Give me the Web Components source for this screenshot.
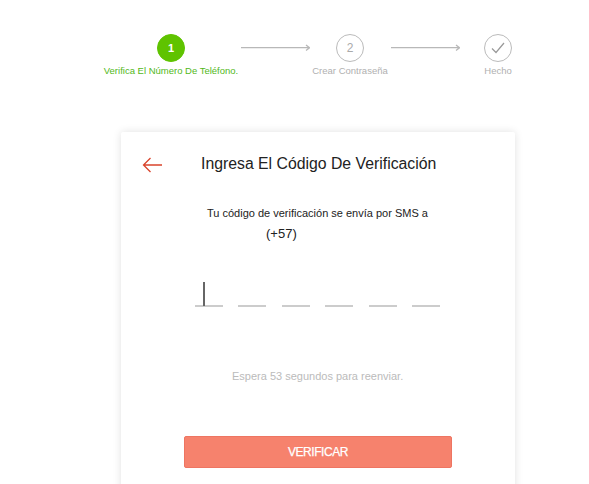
<!DOCTYPE html>
<html lang="es"><head><meta charset="utf-8"><title>Verificación</title>
<style>
html,body{margin:0;padding:0;height:484px;overflow:hidden;background:#fff;font-family:"Liberation Sans",Arial,sans-serif}
</style></head><body>
<verify-page></verify-page>
<script>
const def=(name,html)=>customElements.define(name,class extends HTMLElement{constructor(){super();this.attachShadow({mode:'open'}).innerHTML=html;}});
def('step-item',`<style>
:host{display:flex;flex-direction:column;align-items:center;width:28px;flex:none}
.c{box-sizing:border-box;width:28px;height:28px;border-radius:50%;border:1px solid #bbb;color:#aaa;display:flex;align-items:center;justify-content:center;font-size:12px}
:host([active]) .c{background:#5fc300;border-color:#5fc300;color:#fff;font-weight:700;font-size:11px}
.l{white-space:nowrap;font-size:9.5px;line-height:12px;margin-top:3px;color:#b0b0b0}
:host([active]) .l{color:#52b81a}
</style><div class="c"><slot name="icon"></slot></div><div class="l"><slot></slot></div>`);
def('step-arrow',`<style>
:host{display:block;flex:none;height:28px}
svg{display:block}
</style><svg width="69" height="28" viewBox="0 0 69 28" fill="none" stroke="#b8b8b8" stroke-width="1.3"><path d="M0 13.7H68.5M65 11L68.5 13.7L65 16.4"/></svg>`);
def('step-bar',`<style>:host{display:flex;padding:34px 0 0 157px;height:132px;box-sizing:border-box}</style><slot></slot>`);
def('otp-cell',`<style>
:host{display:block;box-sizing:border-box;width:28px;height:25px;border-bottom:2px solid #ccc;position:relative;flex:none}
:host([focus])::before{content:"";position:absolute;left:8px;top:0;bottom:-1px;width:1.5px;background:#666}
</style>`);
def('otp-row',`<style>:host{display:flex;justify-content:space-between;width:245px;margin:41px 0 0 74px}</style><slot></slot>`);
def('action-button',`<style>
:host{display:flex;box-sizing:border-box;width:268px;height:32px;margin:53px 0 0 63px;align-items:center;justify-content:center;background:#f6826d;border:1px solid #ee7562;border-radius:2px;color:#fff;font-size:12px;letter-spacing:-.45px;-webkit-text-stroke:.25px #fff}
</style><slot></slot>`);
def('verify-card',`<style>
:host{display:flow-root;box-sizing:border-box;width:394px;height:380px;margin-left:121px;background:#fff;border-radius:2px;box-shadow:0 0 8px rgba(0,0,0,.12);color:#222}
.h{display:flex;align-items:center;height:20px;margin-top:22px;padding-left:21px}
h1{margin:0 0 0 39px;font-weight:400;font-size:15.8px;line-height:20px;color:#222}
svg{display:block;flex:none;position:relative;top:1px}
.sms{font-size:11px;line-height:14px;margin:32px 0 0 86px}
.code{font-size:13px;line-height:14px;margin:7px 0 0 145px}
.wait{font-size:11px;line-height:14px;color:#bbb;margin:62px 0 0 111px}
</style>
<div class="h"><svg width="20" height="16" viewBox="0 0 20 16" fill="none" stroke="#d9442c" stroke-width="1.3"><path d="M20 8H1.5M8.5 1L1.5 8L8.5 15"/></svg><h1>Ingresa El Código De Verificación</h1></div>
<div class="sms">Tu código de verificación se envía por SMS a</div>
<div class="code">(+57)</div>
<otp-row><otp-cell focus></otp-cell><otp-cell></otp-cell><otp-cell></otp-cell><otp-cell></otp-cell><otp-cell></otp-cell><otp-cell></otp-cell></otp-row>
<div class="wait">Espera 53 segundos para reenviar.</div>
<action-button>VERIFICAR</action-button>`);
def('verify-page',`<style>:host{display:block;width:589px;height:484px;overflow:hidden}
step-arrow.a{margin:0 26px 0 56px}
step-arrow.b{margin:0 24px 0 27px}
</style>
<step-bar>
<step-item active><span slot="icon">1</span>Verifica El Número De Teléfono.</step-item>
<step-arrow class="a"></step-arrow>
<step-item><span slot="icon">2</span>Crear Contraseña</step-item>
<step-arrow class="b"></step-arrow>
<step-item><svg slot="icon" width="16" height="14" viewBox="0 0 16 14" fill="none" stroke="#999" stroke-width="1.2" style="display:block"><path d="M2 7.5L6 11.5L14 2"/></svg>Hecho</step-item>
</step-bar><verify-card></verify-card>`);
</script>
</body></html>
